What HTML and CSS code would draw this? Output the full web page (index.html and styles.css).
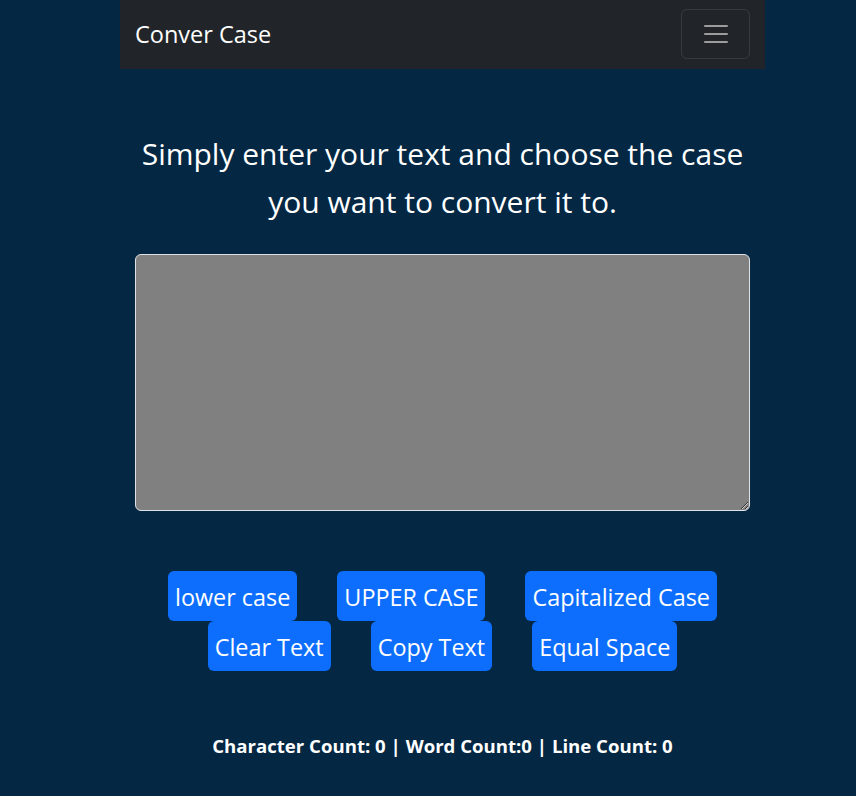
FILE: index.html
```html
<!DOCTYPE html>
<html lang="en">
<head>
<meta charset="utf-8">
<title>Conver Case</title>
<link rel="stylesheet" href="styles.css">
</head>
<body>
<nav class="navbar">
  <span class="brand">Conver Case</span>
  <button class="toggler" type="button" aria-label="Toggle navigation">
    <svg class="toggler-icon" viewBox="0 0 30 30" width="30" height="30">
      <path d="M4 7h22M4 15h22M4 23h22" stroke="rgba(255,255,255,0.55)" stroke-width="2" stroke-linecap="round"/>
    </svg>
  </button>
</nav>
<main class="container">
  <h1 class="title">Simply enter your text and choose the case you want to convert it to.</h1>
  <textarea class="text-box" rows="8"></textarea>
  <div class="buttons">
    <button class="btn">lower case</button>
    <button class="btn">UPPER CASE</button>
    <button class="btn">Capitalized Case</button>
    <button class="btn">Clear Text</button>
    <button class="btn">Copy Text</button>
    <button class="btn">Equal Space</button>
  </div>
  <p class="counts">Character Count: 0 | Word Count:0 | Line Count: 0</p>
</main>
</body>
</html>
```
FILE: styles.css
```css
html, body {
  margin: 0;
  padding: 0;
}
body {
  background: #042743;
  color: #fff;
  font-family: "Open Sans", "Noto Sans", sans-serif;
  min-height: 796px;
}
.navbar {
  margin-left: 120px;
  width: 645px;
  height: 69px;
  box-sizing: border-box;
  background: #212529;
  display: flex;
  align-items: center;
  justify-content: space-between;
  padding: 0 15px 0 15px;
}
.brand {
  font-size: 23.5px;
  color: #fff;
  line-height: 1;
  margin-top: 1px;
}
.toggler {
  width: 69px;
  height: 50px;
  box-sizing: border-box;
  border: 1px solid rgba(255,255,255,0.1);
  border-radius: 6px;
  background: transparent;
  display: flex;
  align-items: center;
  justify-content: center;
  padding: 0;
  margin-top: -1px;
}
.toggler-icon {
  display: block;
}
.container {
  margin-left: 120px;
  width: 645px;
  box-sizing: border-box;
  padding: 0 15px;
}
.title {
  margin: 0;
  padding-top: 61px;
  font-weight: 400;
  font-size: 30px;
  line-height: 48px;
  text-align: center;
}
.text-box {
  display: block;
  box-sizing: border-box;
  width: 615px;
  height: 257px;
  margin-top: 28px;
  background: #808080;
  color: #fff;
  border: 1px solid #dee2e6;
  border-radius: 6px;
  padding: 6px 12px;
  font-family: inherit;
  font-size: 16px;
}
.buttons {
  margin-top: 60px;
  display: flex;
  flex-wrap: wrap;
  justify-content: center;
  column-gap: 40px;
  padding: 0 10px;
}
.btn {
  height: 50px;
  box-sizing: border-box;
  background: #0d6efd;
  color: #fff;
  border: 0;
  border-radius: 6px;
  font-family: inherit;
  font-size: 23.4px;
  padding: 4px 7px 0;
  line-height: 1;
}
.counts {
  margin: 62px 0 0;
  text-align: center;
  font-weight: 700;
  font-size: 18.6px;
}
```
